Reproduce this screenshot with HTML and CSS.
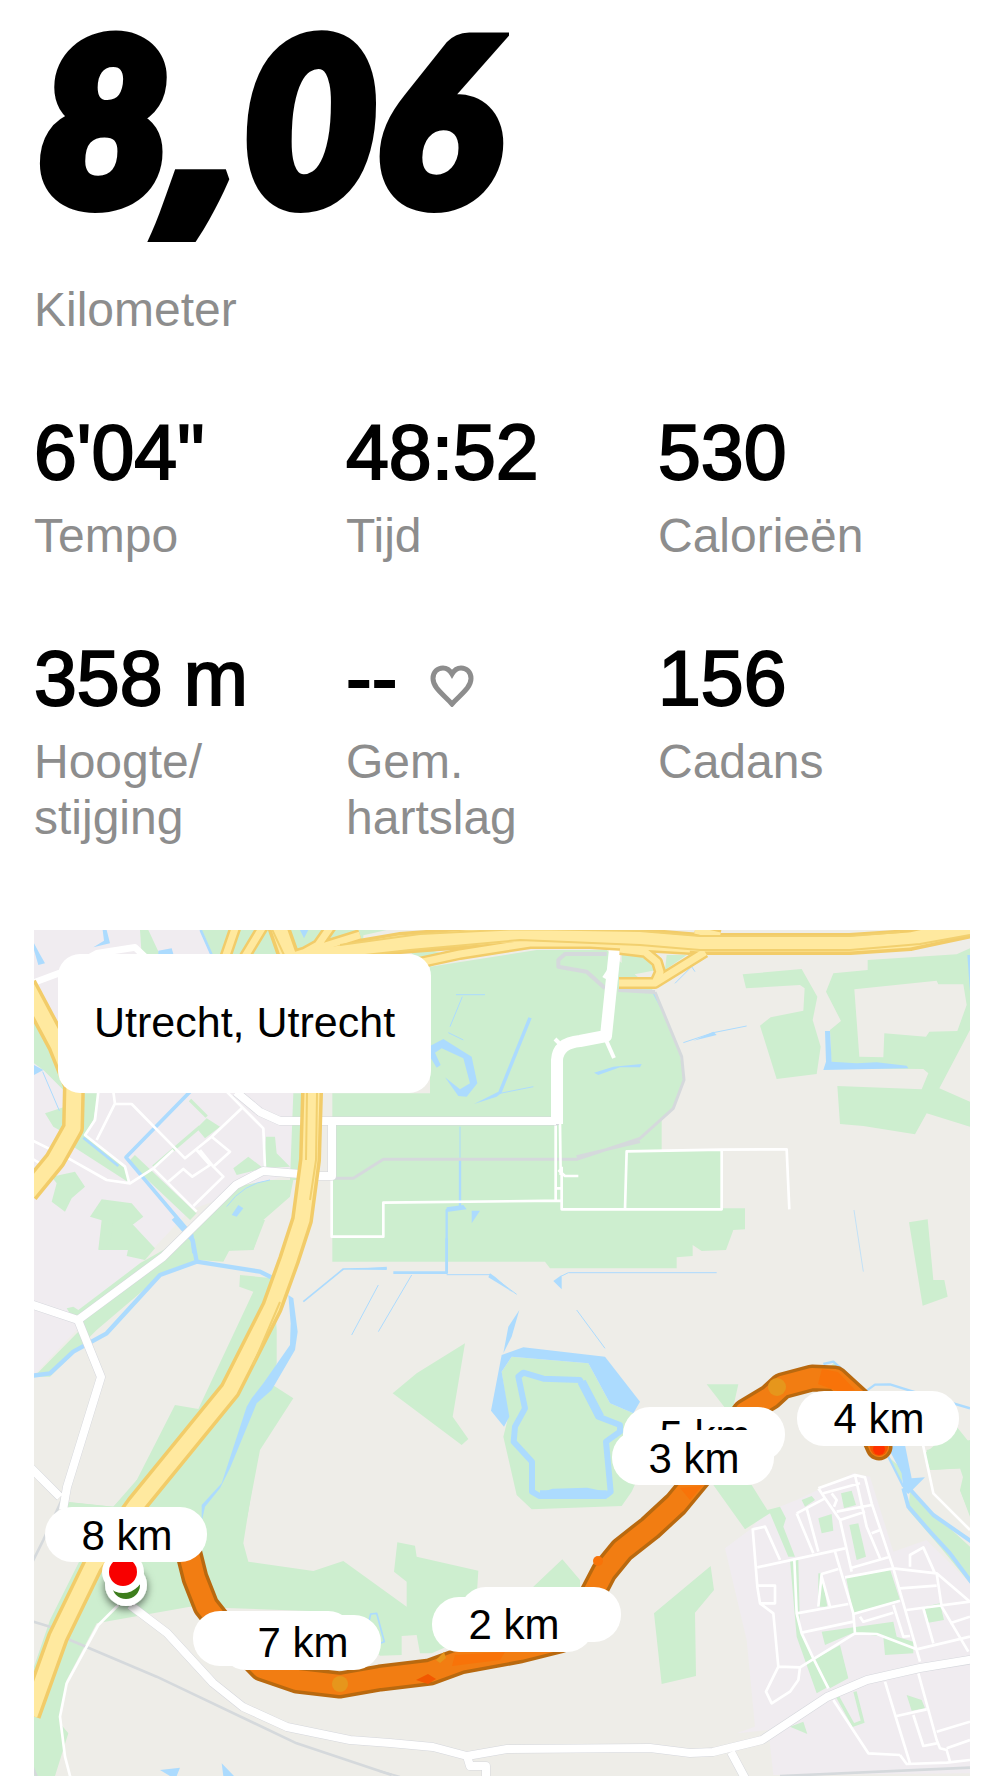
FILE: index.html
```
<!DOCTYPE html>
<html lang="nl">
<head>
<meta charset="utf-8">
<meta name="viewport" content="width=device-width, initial-scale=1">
<title>Run – 8,06 kilometer</title>
<link rel="stylesheet" href="styles.css">
</head>
<body>
<main class="activity">
  <header class="distance">
    <h1 class="distance-value">8<span class="comma">,</span>06</h1>
    <p class="label">Kilometer</p>
  </header>

  <dl class="stats">
    <div class="stat"><dd class="value">6'04"</dd><dt class="label">Tempo</dt></div>
    <div class="stat"><dd class="value">48:52</dd><dt class="label">Tijd</dt></div>
    <div class="stat"><dd class="value">530</dd><dt class="label">Calorieën</dt></div>
    <div class="stat"><dd class="value">358 m</dd><dt class="label">Hoogte/<br>stijging</dt></div>
    <div class="stat">
      <dd class="value value-heart">--
        <svg class="heart" viewBox="0 0 44 42" aria-hidden="true"><path d="M22 39C14 30 3 23 3 13.500C3 7 7.500 3 13 3C17 3 20 5.500 22 9C24 5.500 27 3 31 3C36.500 3 41 7 41 13.500C41 23 30 30 22 39Z"/></svg>
      </dd>
      <dt class="label">Gem.<br>hartslag</dt>
    </div>
    <div class="stat"><dd class="value">156</dd><dt class="label">Cadans</dt></div>
  </dl>

  <section class="map" aria-label="Route">
    <svg class="map-canvas" viewBox="34 930 936 846" preserveAspectRatio="xMidYMin slice">
      <defs>
        <filter id="drop" x="-50%" y="-50%" width="200%" height="200%"><feDropShadow dx="0" dy="3" stdDeviation="4" flood-opacity=".6"/></filter>
      </defs>
      <rect class="land" x="34" y="930" width="936" height="846"/>

      <!-- built-up areas -->
      <path class="town" d="M34 930H320L300 1170L190 1210L100 1305L34 1375Z"/>
      <path class="town" transform="translate(680 1440) scale(.33333)" d="M135 325L215 265L250 220L350 180L520 100L570 110L640 335L740 300L870 430V1000L280 1005L265 870L170 880L225 860L200 600Z"/>

      <!-- parks and fields -->
      <g class="park">
        <g transform="translate(30 920) scale(.33333)">
          <path d="M330 30H355L390 105H335ZM510 30H1000V110H545ZM12 290L90 440L110 520L40 450L12 430ZM45 580L105 560V640L70 620ZM160 520H205L190 600L165 645L285 740L300 790L130 680L160 600Z"/>
          <path d="M65 770L135 755L165 800L125 835L105 875L65 845L80 790ZM215 838L305 850L340 890L300 920L330 950L300 990H205L245 910L180 890ZM610 745L655 710L700 745L620 765ZM708 650H735L740 700L780 740L700 745ZM790 520H820L805 780H780Z"/>
          <path d="M530 595L570 620L525 655L500 625ZM400 1000L620 800L720 780H790L780 830L700 900L670 990Z"/>
          <path class="band" d="M480 540L530 590M510 620L370 740" stroke-width="10"/>
          <path class="band" d="M305 715L490 890" stroke-width="28"/>
        </g>
        <g transform="translate(320 920) scale(.33333)">
          <path d="M37 1025V520H330V140L650 90H860L1010 220L1080 400L1090 480L1060 560L1025 600V690H1205V865H1275V928L1240 930L1218 990L1145 993L1118 975V1008L1070 1012V1045H690L675 1025ZM905 100L1000 105L1010 150L905 170ZM1040 105H1100L1035 150ZM0 30H200L0 75ZM250 75L330 90L400 110L320 145Z"/>
        </g>
        <g transform="translate(650 920) scale(.33333)">
          <path d="M278 163L455 147L502 230L488 300L512 380L500 462L380 477L330 317L362 292L460 272L464 205L450 195L288 205ZM777 907L833 898L850 1080H883L893 1130L818 1157Z"/>
          <path fill-rule="evenodd" d="M528 215L550 160L653 150V120L920 103L960 85V330L868 505L960 545V620L830 580L795 643L640 618L570 612L562 498L815 508L835 460L820 447L545 445L540 330L573 303ZM613 208L860 182L865 193H940L950 255L922 333L838 335L828 350L703 340L700 412L628 410Z"/>
        </g>
        <g transform="translate(30 1220) scale(.33333)">
          <path d="M400 90L520 0H705L670 90L600 88L580 125L500 120L400 160L200 330L60 470H12L150 330L110 265L130 260L145 270L330 130ZM215 0H250L245 50L225 90L205 88ZM270 -5L310 15L375 85L345 120L290 108L300 60L270 50Z"/>
          <path d="M630 165L730 175L740 330V430L720 490L790 535L690 690L650 900H500L110 880V845L250 860L310 800L435 555L505 567L670 215L628 200Z"/>
        </g>
        <path transform="translate(30 1480) scale(.33333)" d="M100 65L250 80L320 0H670L640 190L655 245L850 273L940 243L1130 380V305L1092 275L1102 187L1155 197L1160 230L1345 272L1340 350L1250 500L1205 520H1170L1160 465L1115 468V525L1050 527L900 395L480 380L340 405L200 430L110 600L90 730L115 760L75 888H12V560L60 420L150 240L200 200Z"/>
        <path transform="translate(380 1480) scale(.33333)" d="M460 320L547 238L600 300V340H460ZM822 400L992 258L1002 330L945 398L948 588L845 612Z"/>
        <path transform="translate(340 1240) scale(.33333)" d="M158 460L230 400L375 310L338 530L385 597L365 615ZM485 395L515 350L745 370L810 490L880 520L900 700L875 755L845 798L575 808L530 765L490 590L505 530Z"/>
        <path transform="translate(600 1330) scale(.33333)" d="M320 163H415L400 230L380 240ZM690 110L705 95L750 140L740 145ZM975 370L1070 290L1110 340V560L1080 480L1095 415L990 420Z"/>
        <path transform="translate(680 1440) scale(.33333)" d="M100 135H215L262 210L300 200L318 235L310 260L345 350H325L270 220L230 245L195 268ZM740 30L870 0V225L840 150L860 145L840 85L750 90ZM690 155L870 320V430L780 320L685 210ZM625 50L670 90L665 130Z"/>
        <path transform="translate(680 1440) scale(.33333)" d="M365 180L395 168L405 180L375 200ZM483 160L515 152L528 195L492 205ZM415 235L455 222L460 272L425 280ZM508 255L535 250L558 350L530 360ZM498 412L630 388L660 480L520 520ZM415 400H425L442 500H415ZM425 575L640 545L650 590L700 605V640L615 645L610 590L520 578L435 615ZM400 660L480 615L505 715L450 745ZM733 500L780 490L792 540L745 548ZM330 360H355L360 570L445 740L410 760L350 590ZM680 765L725 780L735 805L695 812ZM330 860L370 845L382 882Z"/>
        <path class="band" transform="translate(680 1440) scale(.33333)" stroke-width="10" d="M470 765L520 855L548 845L525 755"/>
      </g>

      <!-- water -->
      <g class="water">
        <g transform="translate(30 920) scale(.33333)">
          <path class="area" d="M218 30H230L240 70L190 82L222 62ZM12 70L28 100L45 130L25 135L12 90ZM385 92L425 85L430 102H385ZM12 435L40 450L12 465ZM605 885L625 855L640 865L620 890ZM810 30H835L822 55Z"/>
          <path stroke-width="8" d="M512 30L545 105M160 653L265 738"/>
          <path stroke-width="11" d="M480 515L288 712L485 945L492 1000"/>
          <path stroke-width="3" d="M38 455L88 572M590 860Q640 790 720 780"/>
        </g>
        <g transform="translate(30 1220) scale(.33333)">
          <path stroke-width="13" d="M430 -5L488 60L500 125M0 468L60 460L130 395L230 340L390 165L500 125L690 155L740 180"/>
          <path class="area" d="M775 225L790 235L803 335L795 390L725 510L680 550L600 745L570 805L525 860L515 905L515 855L575 790L650 560L665 535L700 490L780 375L782 310Z"/>
          <path stroke-width="5" d="M820 245L940 147L1070 145"/>
        </g>
        <g transform="translate(340 1240) scale(.33333)">
          <path stroke-width="8" d="M160 98H320V-5"/>
          <path stroke-width="3" d="M320 104H450L530 163M215 105L115 275M115 135L35 285M665 108L685 98H1130M710 210L795 325"/>
          <path class="area" d="M640 123L665 105V148ZM538 210L505 260L490 340L515 290ZM450 100L465 110L520 158L445 112ZM30 88L140 80V90ZM485 345L550 322L795 350L900 485L880 520L810 490L745 370L515 350L485 395L508 530L492 560L453 512Z"/>
          <path stroke-width="18" d="M535 410L550 398L610 416L720 420L775 530L840 555V575L798 605L812 755L800 765L740 752L640 755L598 768L576 755V665L521 605L525 560L555 505Z"/>
          <path stroke-width="26" d="M600 764H800M725 425L780 530"/>
        </g>
        <g transform="translate(320 920) scale(.33333)">
          <path stroke-width="3" d="M408 224H495M427 230L390 320M385 338L430 360M540 520L640 500M420 620V860"/>
          <path stroke-width="7" d="M420 720V862L380 870V1060"/>
          <path class="area" d="M625 292L635 295L545 518L530 530L462 552L535 515ZM330 378L370 357L455 410L472 490L440 530L415 528L375 472L420 508L450 490L430 415L365 385L345 398L362 435L350 443L330 410ZM822 458L880 440L965 432L960 442L900 442L835 465ZM455 910V872L480 872ZM380 862L430 855L440 868L380 876ZM998 220L1010 225L1030 280Z"/>
        </g>
        <g transform="translate(650 920) scale(.33333)">
          <path stroke-width="3" d="M75 190L125 140L135 155M100 368L190 338L290 318"/>
          <path stroke-width="2" d="M612 870L640 1055"/>
          <path class="area" d="M525 333H540L545 425L620 430L680 427L770 437L775 445L520 450L528 425ZM952 105H960V215ZM130 362L190 335L200 345Z"/>
        </g>
        <g transform="translate(600 1330) scale(.33333)">
          <path stroke-width="7" d="M670 102L700 95L755 143M800 182L825 164L870 163L930 182L1110 235"/>
          <path class="area" d="M860 345H915L935 445L975 442L925 492L910 480L905 430Z"/>
        </g>
        <g transform="translate(680 1440) scale(.33333)">
          <path stroke-width="7" d="M625 50L670 140"/>
          <path stroke-width="12" d="M670 145L685 200L750 275L810 340L880 435M692 150L760 225L875 305"/>
        </g>
        <g transform="translate(30 1480) scale(.33333)">
          <path class="area" d="M390 870L450 863L440 888H420ZM575 850L612 888H580Z"/>
          <path stroke-width="5" d="M1018 420L1022 402L1040 400L1063 485L1050 490"/>
        </g>
      </g>

      <!-- tracks -->
      <g class="track">
        <g transform="translate(320 920) scale(.33333)">
          <path stroke-width="12" d="M860 102H735L715 120V140L800 155L855 205M895 210L1005 216"/>
          <path stroke-width="9" d="M1005 216L1085 410L1092 480L1060 565L960 655L770 718H190L100 775H40M960 665L770 710"/>
        </g>
        <path stroke-width="8" transform="translate(30 1480) scale(.33333)" d="M0 422L65 442L120 480L380 590L800 790L1085 885M5 250L40 180L100 50M5 855L20 890"/>
        <path stroke-width="6" transform="translate(380 1480) scale(.33333)" d="M-5 872L60 890"/>
        <path stroke-width="8" transform="translate(680 1440) scale(.33333)" d="M300 1008L870 983"/>
      </g>

      <!-- streets -->
      <g class="street">
        <g transform="translate(30 920) scale(.33333)">
          <path stroke-width="20" d="M5 190L100 155L200 100L315 82L350 115"/>
          <path stroke-width="8" d="M15 190L45 280M5 660L110 712L230 780L300 790L370 745L430 690M5 715L30 730M205 515L195 600L165 645L285 740L298 790M255 550L200 660M250 515L255 552H305L465 715L545 650L640 560M590 515L700 625L705 745M370 745L500 875M500 690L540 735L487 770L460 747L415 785M545 650L600 695L550 740L510 690M550 740L580 770L490 858"/>
        </g>
        <g transform="translate(320 920) scale(.33333)" stroke-width="8">
          <path d="M35 768V950H190V848L725 842M707 610V840M720 610L722 765M707 805H722M725 740V868H1205V690M915 868L920 694L1205 689L1400 688L1408 868M715 750L735 768H775"/>
        </g>
        <path stroke-width="8" transform="translate(30 1480) scale(.33333)" d="M265 375L205 435L110 610L90 710L105 830L122 895"/>
        <path stroke-width="8" transform="translate(600 1330) scale(.33333)" d="M968 340L1000 490L1110 600"/>
        <g transform="translate(680 1440) scale(.33333)" stroke-width="8">
          <path d="M218 268L255 260L300 360M218 265L232 440L240 490L280 520L295 680L360 682L355 720L330 755L275 790L258 755L295 680M232 382L495 325M235 437H285V490H240M343 360L350 520L365 580L400 655L445 745M460 780L565 940L660 945M360 682L525 580L590 582L710 628L870 590M350 520L505 492M365 578L520 545M465 335L520 520L525 580M415 500L425 402L475 387M425 410L450 500"/>
          <path d="M350 220L435 175L480 240L515 395M350 220L400 340M380 205L415 335M415 145L525 105L555 112L575 190L640 385L720 665M415 145L435 175M430 160L540 130M455 160L470 180L462 200M470 215L575 195M480 240L555 215M525 105L560 260L600 355M575 280L600 270M510 385L630 350M495 412L640 385L770 400L870 485M690 380V345L730 322L765 400M660 445L770 437M770 400L785 500L865 635M680 510L870 485M520 522L660 482M540 530L550 545L640 518M640 495L670 590L690 588M730 505L760 610M810 550L870 530"/>
          <path d="M615 725L650 840L690 970M715 700L770 900L780 925L800 930L810 965M650 828L740 808M700 825L730 918L770 910M770 875L870 845M800 925L870 900M660 945L680 972L800 968L870 960"/>
        </g>
      </g>

      <!-- main roads: grey casing below the white surface -->
      <g class="road">
        <g class="casing">
          <path d="M236 1092L260 1112L280 1121H302M320 1121H556L557 1060Q558 1043 580 1041L606 1036L615 949"/>
          <path d="M332 1121V1176H316M300 1174L263 1171L236 1185L163 1257L78 1320L30 1304M78 1320L101 1377L67 1487L63 1510M30 1467L60 1497"/>
          <path d="M130 1605L167 1633L213 1683L243 1707L287 1727L350 1740L390 1743L433 1747L467 1756L507 1749L650 1748L690 1753L713 1752L762 1740L827 1697L867 1680L920 1668L975 1659"/>
          <path d="M467 1756L470 1766H486V1780M731 1752L746 1780"/>
        </g>
        <g class="surface">
          <path d="M236 1092L260 1112L280 1121H302M320 1121H556"/>
          <path class="wide" d="M557 1124V1060Q558 1043 580 1041L606 1036L615 949"/>
          <path class="spur" d="M606 1040L614 1058M604 978L612 966M564 1048L555 1039"/>
          <path d="M332 1121V1176H316M300 1174L263 1171L236 1185L163 1257L78 1320L30 1304M78 1320L101 1377L67 1487L63 1510M30 1467L60 1497"/>
          <path d="M130 1605L167 1633L213 1683L243 1707L287 1727L350 1740L390 1743L433 1747L467 1756L507 1749L650 1748L690 1753L713 1752L762 1740L827 1697L867 1680L920 1668L975 1659"/>
          <path d="M467 1756L470 1766H486V1780M731 1752L746 1780"/>
        </g>
      </g>

      <!-- motorways -->
      <g class="motorway">
        <g class="ramp edge">
          <path d="M225 958L238 920M244 958L264 925M300 955L318 945L332 925M290 957L360 935M395 968L460 954L530 943H590L690 949"/>
          <path d="M619 983H655L705 952M655 983L660 972L657 962L645 952L620 949M695 930L720 936"/>
        </g>
        <g class="edge">
          <path d="M276 920L290 960L312 1020V1093L310 1160L302 1220L289 1260L272 1307L230 1390L137 1504L93 1565L58 1637L30 1715"/>
          <path d="M26 985L58 1045L74 1085L73 1128L55 1160L28 1193"/>
          <path d="M300 960L400 943L520 934L640 939L700 944H850L910 940L980 925"/>
        </g>
        <g class="ramp fill">
          <path d="M225 958L238 920M244 958L264 925M300 955L318 945L332 925M290 957L360 935M395 968L460 954L530 943H590L690 949"/>
          <path d="M619 983H655L705 952M655 983L660 972L657 962L645 952L620 949M695 930L720 936"/>
        </g>
        <g class="fill">
          <path d="M276 920L290 960L312 1020V1093L310 1160L302 1220L289 1260L272 1307L230 1390L137 1504L93 1565L58 1637L30 1715"/>
          <path d="M26 985L58 1045L74 1085L73 1128L55 1160L28 1193"/>
          <path d="M300 960L400 943L520 934L640 939L700 944H850L910 940L980 925"/>
        </g>
        <path class="lane" d="M320 960L410 950L520 940L640 945L700 950H850L920 944L970 935M340 945L420 934L520 929L640 931L700 936H850L900 932M307 1093L306 1160M317 1093L316 1160L310 1200M280 1302L253 1365M270 925L284 955"/>
      </g>

      <!-- recorded route -->
      <g class="route">
        <path class="route-edge" d="M188 1550L195 1578L206 1606L225 1630L262 1668L297 1680L340 1685L380 1678L430 1672L460 1661L520 1650L560 1640L592 1595L604 1572L622 1550L650 1528L676 1504L700 1475L745 1412L770 1397L782 1386L812 1378L835 1379L858 1400L879 1447"/>
        <path class="route-fill" d="M188 1550L195 1578L206 1606L225 1630L262 1668L297 1680L340 1685L380 1678L430 1672L460 1661L520 1650L560 1640L592 1595L604 1572L622 1550L650 1528L676 1504L700 1475L745 1412L770 1397L782 1386L812 1378L835 1379L858 1400L879 1447"/>
        <circle class="pace-slow" cx="777" cy="1387" r="9"/>
        <circle class="pace-slow" cx="340" cy="1684" r="8"/>
        <path class="pace-slow" d="M436 1660L444 1652L446 1658L440 1663Z"/>
        <path class="pace-fast" d="M416 1680L428 1674L436 1679L428 1684Z"/>
        <circle class="pace-mid" cx="598" cy="1561" r="5"/>
        <path class="pace-mid" d="M822 1369L838 1372L855 1390L840 1392L818 1384ZM455 1655L505 1652L500 1660L452 1666ZM680 1488L702 1486L690 1500Z"/>
        <circle class="pace-fast" cx="879" cy="1447" r="9"/>
        <circle class="pace-end" cx="879" cy="1449" r="6"/>
      </g>

      <g class="marker" filter="url(#drop)"><circle cx="126" cy="1585" r="21"/><circle class="start" cx="126" cy="1585" r="14"/></g>
      <g class="marker"><circle cx="123" cy="1572" r="21"/><circle class="finish" cx="123" cy="1572" r="14"/></g>

      <!-- kilometre flags -->
      <g class="flag">
        <rect x="45" y="1507" width="162" height="55" rx="27"/><text x="127" y="1550">8 km</text>
        <rect x="193" y="1611" width="162" height="55" rx="27"/>
        <rect x="219" y="1615" width="162" height="55" rx="27"/><text x="303" y="1657">7 km</text>
        <rect x="459" y="1587" width="162" height="55" rx="27"/>
        <rect x="432" y="1597" width="162" height="55" rx="27"/><text x="514" y="1639">2 km</text>
        <rect x="623" y="1407" width="162" height="55" rx="27"/><text x="705" y="1450">5 km</text>
        <rect x="612" y="1430" width="162" height="55" rx="27"/><text x="694" y="1473">3 km</text>
        <rect x="797" y="1391" width="162" height="55" rx="27"/><text x="879" y="1433">4 km</text>
      </g>
    </svg>
    <p class="place">Utrecht, Utrecht</p>
  </section>
</main>
</body>
</html>
```
FILE: styles.css
```
* { box-sizing: border-box; }

body {
  margin: 0;
  background: #fff;
  color: #000;
  font-family: "Liberation Sans", Arial, sans-serif;
}

.activity { padding: 0 18px 0 34px; }

h1, p, dl, dd, dt { margin: 0; }

.distance-value {
  padding: 2px 0 0 4px;
  font: italic 900 228px/228px Lato, sans-serif;
  -webkit-text-stroke: 14px #000;
}

.comma {
  font-family: "Open Sans", sans-serif;
  font-size: 240px;
  line-height: 0;
}

.distance .label { margin-top: 52px; }

.label {
  color: #8d8d8d;
  font-size: 48px;
  line-height: 56px;
}

.stats {
  display: grid;
  grid-template-columns: repeat(3, 1fr);
  row-gap: 74px;
  margin: 74px 0 84px;
}

.stat {
  display: flex;
  flex-direction: column;
  gap: 16px;
}

.value {
  font-size: 77px;
  line-height: 80px;
  -webkit-text-stroke: 2px #000;
}

.value-heart {
  display: flex;
  align-items: center;
  gap: 33px;
}

.heart {
  width: 44px;
  height: 42px;
  margin-top: 16px;
  fill: none;
  stroke: #8d8d8d;
  stroke-width: 5;
}

.map {
  position: relative;
  overflow: hidden;
}

.map-canvas {
  display: block;
  width: 100%;
  aspect-ratio: 936 / 846;
}

.place {
  position: absolute;
  top: 24px;
  left: 24px;
  padding: 41px 36px 43px;
  border-radius: 22px;
  background: #fff;
  font-size: 43px;
  line-height: 55px;
}

.land { fill: #eeede8; }
.town { fill: #f0ecf0; }
.park { fill: #cdeecf; }
.band { fill: none; stroke: #cdeecf; }
.water { fill: none; stroke: #acdbfe; stroke-linejoin: round; }
.water .area { fill: #acdbfe; stroke: none; }
.track { fill: none; stroke: #d5d9dc; stroke-linejoin: round; }
.street { fill: none; stroke: #fff; stroke-linejoin: round; }

.road { fill: none; stroke-linejoin: round; }
.road .casing { stroke: #d5d7dc; stroke-width: 9; }
.road .surface { stroke: #fff; stroke-width: 8; }
.road .surface .wide { stroke-width: 12; }
.road .surface .spur { stroke-width: 4; }

.motorway { fill: none; stroke-linejoin: round; }
.edge { stroke: #f2cc69; stroke-width: 22; }
.fill { stroke: #ffe99f; stroke-width: 15; }
.ramp.edge { stroke-width: 12; }
.ramp.fill { stroke-width: 7; }
.lane { stroke: #f2d06f; stroke-width: 2; }

.route { fill: none; stroke-linecap: round; stroke-linejoin: round; }
.route-edge { stroke: #b9690f; stroke-width: 27; }
.route-fill { stroke: #f27d12; stroke-width: 20; }
.pace-slow { fill: #e6961c; }
.pace-mid { fill: #f87309; }
.pace-fast { fill: #f25800; }
.pace-end { fill: #ff3200; }

.marker { fill: #fff; }
.marker .start { fill: #3c7d1e; }
.marker .finish { fill: #f80000; }

.flag { fill: #fff; }
.flag text {
  fill: #000;
  font-size: 42px;
  text-anchor: middle;
}
```
